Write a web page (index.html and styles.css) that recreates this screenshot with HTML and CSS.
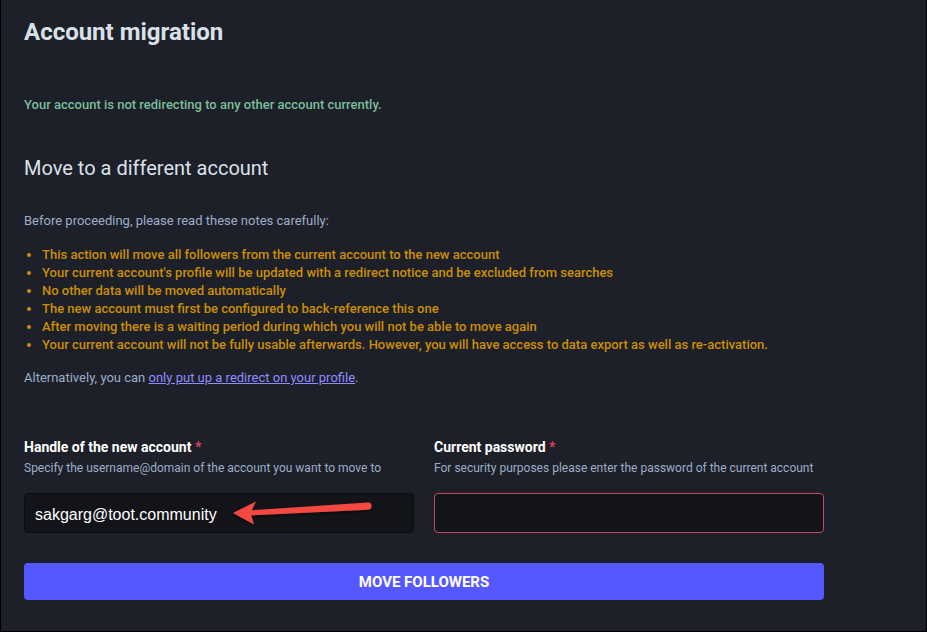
FILE: index.html
```html
<!DOCTYPE html>
<html lang="en">
<head>
<meta charset="utf-8">
<title>Account migration</title>
<link rel="stylesheet" href="styles.css">
</head>
<body>
<div class="frame">
  <h1 class="title">Account migration</h1>
  <p class="status">Your account is not redirecting to any other account currently.</p>
  <h2 class="subtitle">Move to a different account</h2>
  <p class="muted intro">Before proceeding, please read these notes carefully:</p>
  <ul class="notes">
    <li>This action will move all followers from the current account to the new account</li>
    <li>Your current account's profile will be updated with a redirect notice and be excluded from searches</li>
    <li>No other data will be moved automatically</li>
    <li>The new account must first be configured to back-reference this one</li>
    <li>After moving there is a waiting period during which you will not be able to move again</li>
    <li>Your current account will not be fully usable afterwards. However, you will have access to data export as well as re-activation.</li>
  </ul>
  <p class="muted alt">Alternatively, you can <a href="#" class="link">only put up a redirect on your profile</a>.</p>

  <div class="fields">
    <div class="field">
      <label class="label">Handle of the new account <abbr class="req">*</abbr></label>
      <div class="hint">Specify the username@domain of the account you want to move to</div>
      <div class="input-wrap">
        <div class="input">sakgarg@toot.community</div>
        <svg class="arrow" width="390" height="40" viewBox="0 0 390 40">
          <defs>
            <filter id="sh" x="-10%" y="-50%" width="120%" height="200%">
              <feDropShadow dx="0" dy="1.5" stdDeviation="1.5" flood-color="#000" flood-opacity="0.6"/>
            </filter>
          </defs>
          <g filter="url(#sh)" fill="#f44a42">
            <path d="M224 17.5 L344 9.5 A3.6 3.6 0 0 1 344 16.7 L224 22.5 Z"/>
            <path d="M209 20 L232 8.5 L226.5 20 L230 31.5 Z"/>
          </g>
        </svg>
      </div>
    </div>
    <div class="field">
      <label class="label">Current password <abbr class="req">*</abbr></label>
      <div class="hint">For security purposes please enter the password of the current account</div>
      <div class="input input-error"></div>
    </div>
  </div>

  <button class="btn">MOVE FOLLOWERS</button>
</div>
</body>
</html>
```

FILE: styles.css
```css
* { box-sizing: border-box; }
html, body { margin: 0; padding: 0; background: #000; }
body { font-family: Roboto, "Noto Sans", sans-serif; }

.frame {
  width: 927px;
  height: 632px;
  background: #1e2029;
  border-left: 1px solid #000;
  border-right: 1px solid #000;
  border-bottom: 1px solid #000;
  padding: 17px 0 0 23px;
  overflow: hidden;
}

.title {
  margin: 0;
  font-size: 24px;
  line-height: 30px;
  font-weight: 700;
  color: #d9e1e8;
}

.status {
  margin: 49px 0 0;
  font-size: 13px;
  line-height: 18px;
  font-weight: 500;
  color: #79bd9a;
}

.subtitle {
  margin: 41px 0 0;
  font-size: 20px;
  line-height: 26px;
  font-weight: 400;
  color: #d9e1e8;
}

.muted {
  margin: 0;
  font-size: 13px;
  line-height: 18px;
  color: #9baec8;
}

.intro { margin-top: 31px; }
.alt { margin-top: 15px; }

.notes {
  margin: 16px 0 0;
  padding: 0 0 0 18px;
  font-size: 13px;
  line-height: 18px;
  font-weight: 500;
  color: #ca8f04;
}

.link { color: #8c8dff; text-decoration: underline; }

.fields {
  margin-top: 50px;
  display: grid;
  grid-template-columns: 390px 390px;
  column-gap: 20px;
}

.label {
  display: block;
  font-size: 14px;
  line-height: 20px;
  font-weight: 700;
  color: #ffffff;
}

.req {
  color: #df405a;
  text-decoration: none;
  font-weight: 700;
}

.hint {
  margin-top: 3px;
  font-size: 12px;
  line-height: 16px;
  color: #9baec8;
}

.input-wrap { position: relative; margin-top: 17px; }
.field > .input { margin-top: 17px; }

.input {
  height: 40px;
  background: #131419;
  border: 1px solid #0c0d11;
  border-radius: 4px;
  padding: 2px 10px 0;
  font-family: "Liberation Sans", Arial, sans-serif;
  font-size: 16px;
  line-height: 38px;
  color: #ffffff;
}

.input-error { border-color: #c24a5e; }

.arrow {
  position: absolute;
  left: 0;
  top: 0;
  overflow: visible;
}

.btn {
  display: block;
  margin-top: 30px;
  width: 800px;
  height: 37px;
  border: 0;
  border-radius: 4px;
  background: #5658ff;
  color: #ffffff;
  font-family: Roboto, "Noto Sans", sans-serif;
  font-size: 15px;
  font-weight: 700;
  letter-spacing: 0;
}
```
